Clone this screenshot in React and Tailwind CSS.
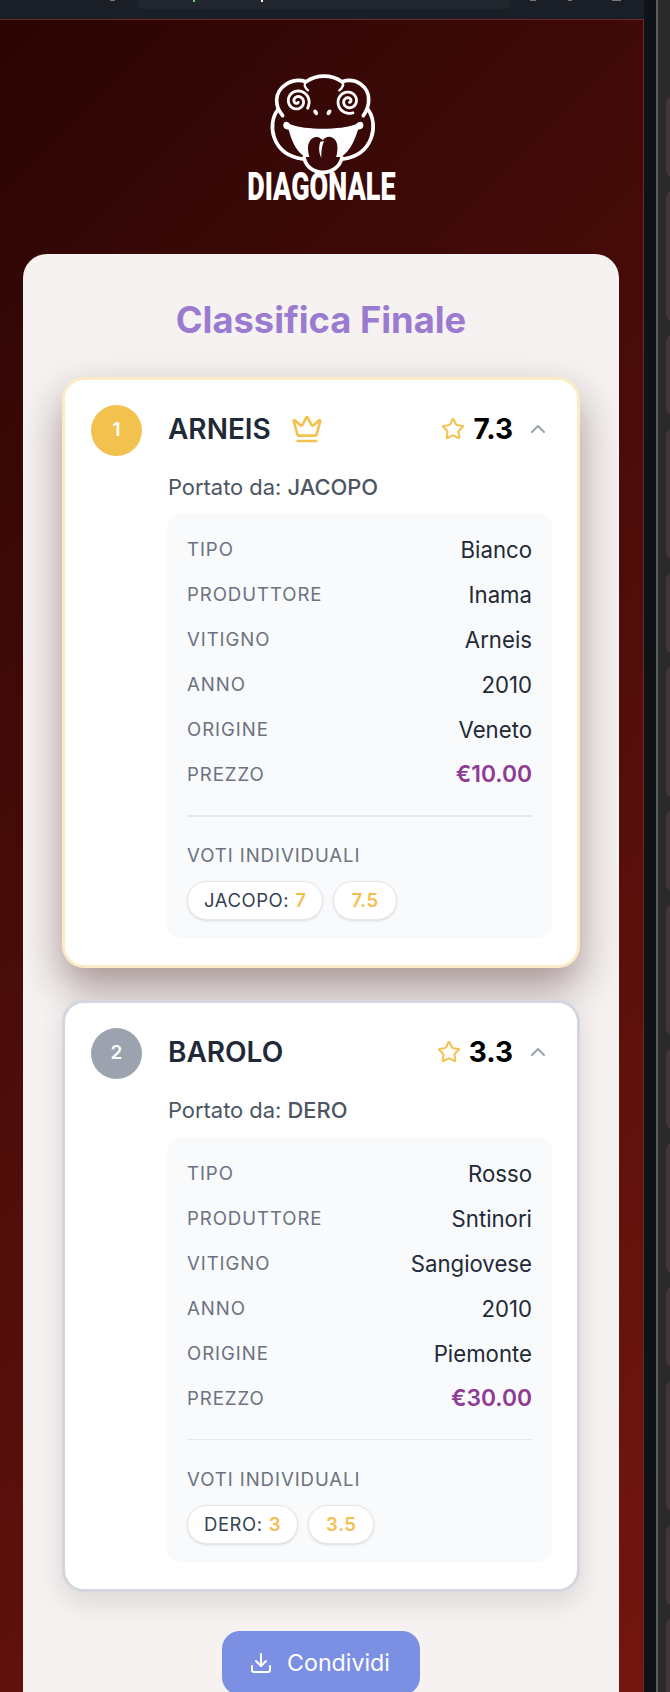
import React from "react";
import { ChevronUp, Crown, Download, Star } from "lucide-react";

const wines = [
  {
    pos: 1,
    name: "ARNEIS",
    score: "7.3",
    by: "JACOPO",
    avg: "7.5",
    vote: "7",
    rows: [
      ["Tipo", "Bianco"],
      ["Produttore", "Inama"],
      ["Vitigno", "Arneis"],
      ["Anno", "2010"],
      ["Origine", "Veneto"],
      ["Prezzo", "€10.00"],
    ],
  },
  {
    pos: 2,
    name: "BAROLO",
    score: "3.3",
    by: "DERO",
    avg: "3.5",
    vote: "3",
    rows: [
      ["Tipo", "Rosso"],
      ["Produttore", "Sntinori"],
      ["Vitigno", "Sangiovese"],
      ["Anno", "2010"],
      ["Origine", "Piemonte"],
      ["Prezzo", "€30.00"],
    ],
  },
];

// side panel items in the neighbouring window
const sideItems = [80, 130, 80, 130, 80, 130, 80, 130, 80, 130, 80, 130, 80, 130];

const spiral = (cx, cy, dir) => {
  let d = "";
  for (let i = 0; i <= 60; i++) {
    const t = i / 60;
    const a = dir * t * Math.PI * 3.9 + 0.9;
    const r = 4 + t * 33;
    d += `${i === 0 ? "M" : "L"}${(cx + r * Math.cos(a)).toFixed(1)} ${(cy + r * Math.sin(a)).toFixed(1)} `;
  }
  return d;
};

const Logo = () => (
  <svg viewBox="0 0 360 330" className="w-[120px] h-[110px]" fill="none" stroke="#fff" strokeLinecap="round">
    <g strokeWidth="11">
      <path d="M62 146 C 50 130 44 120 44 100 C 44 60 90 30 132 44 C 165 22 208 22 240 44 C 282 30 322 60 320 100 C 320 120 314 132 304 146" />
      <path d="M132 44 C 124 52 128 62 138 70" strokeWidth="7" />
      <path d="M240 44 C 246 52 242 62 232 70" strokeWidth="7" />
      <path d="M48 128 C 14 170 28 262 122 276" />
      <path d="M318 128 C 350 170 336 262 244 276" />
      <path d="M126 272 C 132 300 155 316 183 316 C 212 316 234 298 240 272" />
    </g>
    <path d={spiral(106, 103, 1)} strokeWidth="8.5" />
    <path d={spiral(260, 103, -1)} strokeWidth="8.5" />
    <ellipse cx="161" cy="136" rx="6" ry="9" fill="#fff" stroke="none" transform="rotate(-30 161 136)" />
    <ellipse cx="201" cy="136" rx="6" ry="9" fill="#fff" stroke="none" transform="rotate(30 201 136)" />
    <path
      d="M64 172 C 68 160 80 164 84 172 C 130 190 235 190 282 172 C 288 164 300 160 304 172 C 306 184 296 188 288 188 C 276 228 258 258 236 270 L 130 270 C 108 258 90 228 80 188 C 72 188 62 184 64 172 Z"
      fill="#fff"
      stroke="none"
    />
    <path
      d="M138 248 C 136 224 150 208 166 210 C 174 212 178 216 182 220 C 188 212 198 208 206 210 C 222 214 228 230 226 250 C 224 282 208 304 184 304 C 158 304 140 280 138 248 Z"
      fill="#3b0908"
      stroke="none"
    />
    <path d="M175 224 C 169 242 171 258 178 272 C 178 256 178 240 186 222 Z" fill="#fff" stroke="none" />
  </svg>
);

const WineCard = ({ wine }) => {
  const first = wine.pos === 1;
  return (
    <div
      className={`rounded-[22px] border-[3px] bg-white pl-[26px] pr-[25px] pt-[25px] pb-[26px] flex gap-[25px] ${
        first
          ? "border-[#fcecc6] shadow-[0_20px_42px_rgba(60,20,20,0.42)]"
          : "border-[#d3d6de] shadow-[0_10px_28px_rgba(40,20,20,0.12)]"
      }`}
    >
      <div
        className={`w-[51px] h-[51px] shrink-0 rounded-full flex items-center justify-center text-white text-[19px] font-semibold ${
          first ? "bg-[#f2c14e]" : "bg-[#9ca3af]"
        }`}
      >
        {wine.pos}
      </div>
      <div className="flex-1 min-w-0">
        <div className="h-[47px] pl-[1px] flex items-center">
          <span className="text-[28px] font-semibold text-[#1f2937]">{wine.name}</span>
          {first && <Crown size={32} strokeWidth={2} className="ml-[20px] text-[#f2c14e]" />}
          <div className="ml-auto flex items-center">
            <Star size={24} strokeWidth={2} className="text-[#f2c14e] mr-[8px]" />
            <span className="text-[28px] font-bold text-black">{wine.score}</span>
            <ChevronUp size={24} strokeWidth={2} className="text-[#9ca3af] ml-[13px] mr-[2px]" />
          </div>
        </div>
        <div className="mt-[23px] pl-[1px] text-[21.9px] leading-[24px] text-[#4b5563]">
          Portato da: <span className="font-medium">{wine.by}</span>
        </div>
        <div className={`rounded-[14px] bg-[#f9fafb] px-[20px] pt-[14px] pb-[19px] ${first ? "mt-[14px]" : "mt-[15px]"}`}>
          {wine.rows.map(([label, value]) => (
            <div key={label} className="h-[45px] flex items-center justify-between">
              <span className="text-[18.6px] uppercase tracking-[0.05em] text-[#6b7280]">{label}</span>
              <span
                className={`${
                  label === "Prezzo"
                    ? "text-[22.8px] font-semibold text-[#8e3a96]"
                    : "text-[22.2px] text-[#1f2937]"
                }`}
              >
                {value}
              </span>
            </div>
          ))}
          <div className={`mt-[18px] bg-[#e5e7eb] ${first ? "h-[2px]" : "h-px"}`} />
          <div className={`text-[18.6px] leading-[24px] uppercase tracking-[0.05em] text-[#6b7280] ${first ? "mt-[26px]" : "mt-[27px]"}`}>
            Voti individuali
          </div>
          <div className="mt-[14px] flex gap-[10px]">
            <div className="h-[39px] px-[16px] rounded-full bg-white border border-[#e5e7eb] shadow-sm flex items-center text-[18.5px] tracking-[0.03em] text-[#374151]">
              {wine.by}:<span className="ml-[6px] font-semibold text-[#f4be4f]">{wine.vote}</span>
            </div>
            <div className="h-[39px] px-[17px] rounded-full bg-white border border-[#e5e7eb] shadow-sm flex items-center text-[18.5px] tracking-[0.03em] font-semibold text-[#f4be4f]">
              {wine.avg}
            </div>
          </div>
        </div>
      </div>
    </div>
  );
};

const App = () => {
  return (
    <div className="w-[670px] h-[1692px] overflow-hidden flex bg-[#2a2a2a] font-['Inter',sans-serif]">
      <div className="w-[644px] shrink-0 flex flex-col">
        {/* browser toolbar, cut at the top */}
        <div className="h-[19px] shrink-0 bg-[#1a1f27] flex items-start">
          <div className="ml-[110px] w-[5px] h-[1px] bg-[#777]" />
          <div className="ml-[23px] w-[372px] h-[9px] rounded-b-[6px] bg-[#22272f] flex items-start">
            <div className="ml-[55px] w-[2px] h-[2px] bg-[#6fcf70]" />
            <div className="ml-[66px] w-[2px] h-[2px] bg-white" />
          </div>
          <div className="ml-[20px] w-[6px] h-[1px] bg-[#777]" />
          <div className="ml-[32px] w-[4px] h-[1px] bg-[#777]" />
          <div className="ml-[40px] w-[9px] h-[1px] bg-[#777]" />
        </div>
        <div className="flex-1 min-h-0 border-t border-r border-[#6b2a2a] bg-[linear-gradient(135deg,#2a0504,#74160f)] flex flex-col">
          <div className="h-[234px] shrink-0 flex flex-col items-center pt-[47px]">
            <Logo />
            <div className="font-['Roboto',sans-serif] font-black text-[38px] leading-[30px] text-white scale-x-[0.71] whitespace-nowrap -mt-[5px]">
              DIAGONALE
            </div>
          </div>
          <div className="ml-[23px] w-[596px] flex-1 rounded-t-[24px] bg-[#f5f2f1] px-[39px] pt-[41px]">
            <h1 className="text-center text-[36.3px] leading-[50px] font-bold text-[#9b7bd0]">Classifica Finale</h1>
            <div className="mt-[32px] flex flex-col gap-[32px]">
              {wines.map((w) => (
                <WineCard key={w.pos} wine={w} />
              ))}
            </div>
            <div className="mt-[39px] flex justify-center">
              <button className="w-[198px] h-[64px] rounded-[18px] bg-[#7b8fe3] text-white flex items-center justify-center gap-[14px] text-[23.2px] pr-[3px]">
                <Download size={24} strokeWidth={2} />
                Condividi
              </button>
            </div>
          </div>
        </div>
      </div>
      <div className="w-[12px] shrink-0 bg-[#0f1216]" />
      <div className="w-[2px] shrink-0 bg-[#5c5c5c]" />
      <div className="flex-1 pl-[8px] pt-[97px] flex flex-col gap-[14px]">
        {sideItems.map((h, i) => (
          <div
            key={i}
            className={`w-[12px] shrink-0 rounded-l-[6px] bg-[#423636] ${h === 80 ? "h-[80px]" : "h-[130px]"}`}
          />
        ))}
      </div>
    </div>
  );
};

export default App;
